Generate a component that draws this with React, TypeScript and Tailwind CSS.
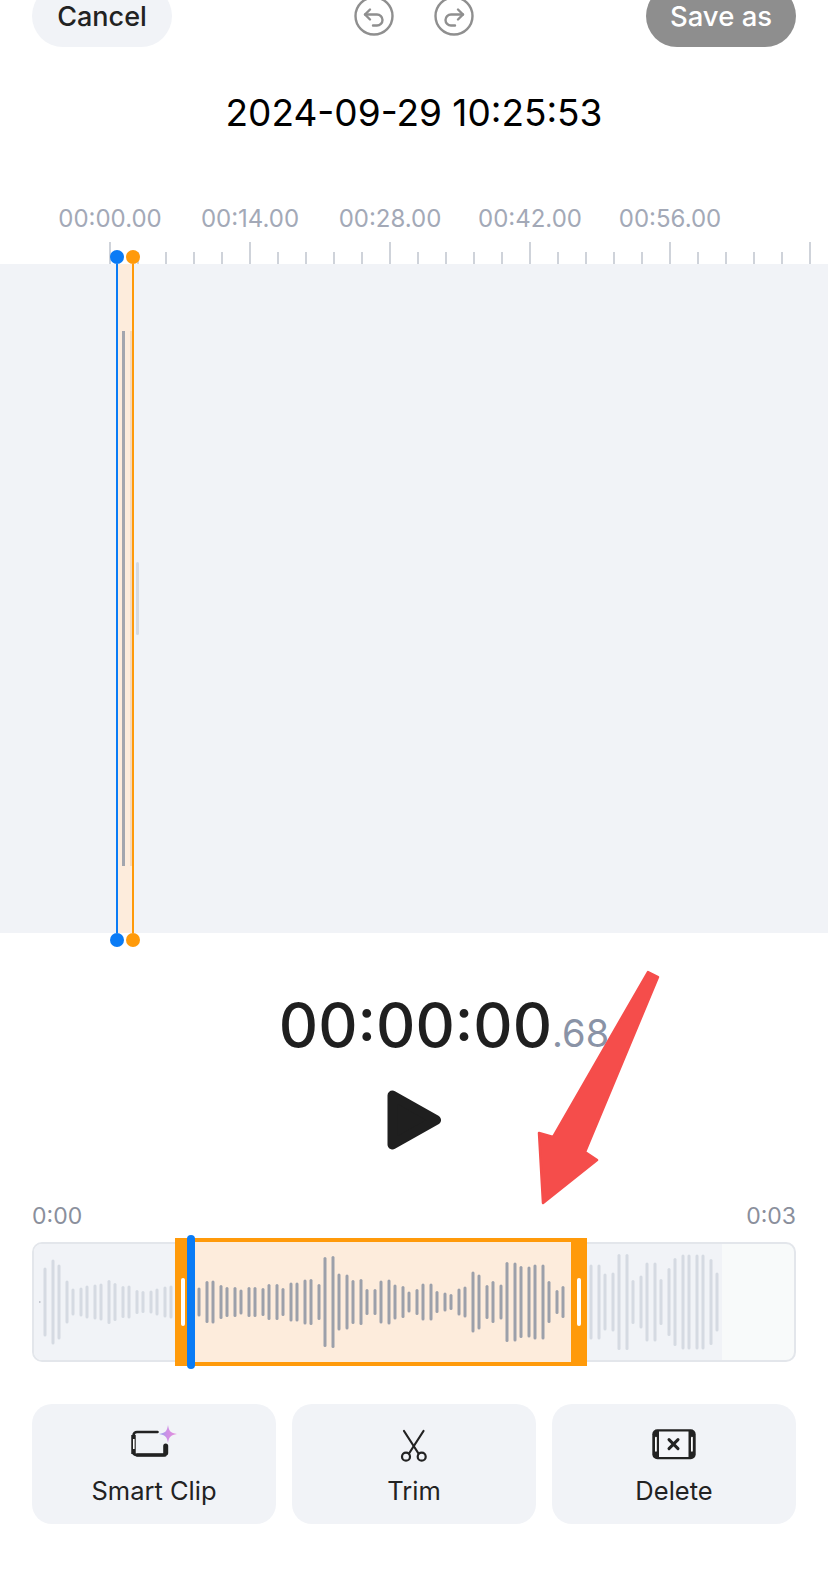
const FONT = "font-['Inter','Noto_Sans',sans-serif]";

const rulerLabels = ['00:00.00', '00:14.00', '00:28.00', '00:42.00', '00:56.00'];

// [x, height] in strip coordinates, read off the reference
const leftBars = [[45, 69], [53, 85], [59, 75], [67, 43], [73, 27], [81, 29], [87, 33], [95, 35], [101, 37], [109, 44], [115, 38], [123, 32], [129, 33], [137, 24], [143, 22], [151, 23], [157, 27], [165, 31], [171, 33]];
const midBars = [[199, 29], [207, 42], [213, 43], [221, 34], [227, 30], [235, 30], [241, 25], [249, 30], [255, 30], [263, 28], [269, 36], [277, 36], [283, 28], [291, 39], [297, 39], [305, 45], [311, 46], [319, 36], [325, 90], [333, 92], [339, 57], [347, 55], [353, 44], [361, 46], [367, 26], [375, 26], [381, 43], [389, 45], [395, 35], [403, 32], [409, 21], [417, 26], [423, 37], [431, 37], [437, 22], [445, 19], [451, 16], [459, 27], [465, 31], [473, 61], [479, 55], [487, 34], [493, 42], [501, 35], [507, 80], [515, 79], [521, 72], [529, 71], [535, 75], [543, 75], [549, 42], [557, 24], [563, 32]];
const rightBars = [[591, 75], [599, 75], [605, 57], [613, 59], [619, 96], [627, 96], [633, 44], [641, 53], [647, 79], [655, 79], [661, 46], [669, 68], [675, 88], [683, 95], [689, 95], [697, 95], [703, 95], [711, 86], [717, 59]];

function Ticks() {
  const ticks = [];
  for (let i = 0; i < 26; i++) {
    const major = i % 5 === 0;
    ticks.push(<rect key={i} x={109 + i * 28} y={major ? 0 : 10} width="2" height={major ? 22 : 12} fill="#cfd3da" />);
  }
  return (
    <svg width="828" height="22" className="block mt-[8px]">
      {ticks}
    </svg>
  );
}

function Bars({ bars, color, offset }: { bars: number[][]; color: string; offset: number }) {
  return (
    <>
      {bars.map(([x, h]) => (
        <rect key={x} x={x - offset - 1.5} y={60 - h / 2} width="3" height={h} rx="1.5" fill={color} />
      ))}
    </>
  );
}

function CircleArrow({ flip }: { flip?: boolean }) {
  return (
    <svg width="40" height="40" viewBox="0 0 40 40" fill="none" stroke="#8f8f8f" strokeWidth="2.4" strokeLinecap="round" strokeLinejoin="round">
      <circle cx="20" cy="20" r="18.5" />
      <g transform={flip ? 'translate(40 0) scale(-1 1)' : undefined}>
        <path d="M16 13.500l-5 5 5 5" />
        <path d="M11 18.500h12a5.500 5.500 0 0 1 0 11h-4" />
      </g>
    </svg>
  );
}

function SmartClipIcon() {
  return (
    <svg width="48" height="40" viewBox="0 0 48 40" fill="none">
      <defs>
        <linearGradient id="spark" x1="29" y1="10" x2="47" y2="10" gradientUnits="userSpaceOnUse">
          <stop offset="0" stopColor="#8fa4ec" />
          <stop offset="0.45" stopColor="#cf8fe6" />
          <stop offset="1" stopColor="#e58fd8" />
        </linearGradient>
      </defs>
      <path d="M27.5 8H7a3.5 3.5 0 0 0-3.5 3.5v18A3.5 3.5 0 0 0 7 31h26a3 3 0 0 0 3-3v-5" stroke="#222" strokeWidth="2.6" strokeLinecap="round" />
      <path d="M3.5 11v19" stroke="#222" strokeWidth="4.5" />
      <path d="M7 31h28" stroke="#222" strokeWidth="3.4" strokeLinecap="round" />
      <path d="M35.7 22v7" stroke="#222" strokeWidth="5" strokeLinecap="round" />
      <rect x="3" y="15" width="1.6" height="10" fill="#fff" />
      <path d="M38 1c.9 6 2.5 8 9 9-6.5 1-8.100 3-9 9-.9-6-2.500-8-9-9 6.500-1 8.100-3 9-9z" fill="url(#spark)" />
    </svg>
  );
}

function TrimIcon() {
  return (
    <svg width="48" height="40" viewBox="0 0 48 40" fill="none" stroke="#222" strokeWidth="2.2" strokeLinecap="round">
      <path d="M14 7l14.500 22.500" />
      <path d="M33.500 7L19 29.500" />
      <circle cx="16" cy="32.700" r="4" />
      <circle cx="31.700" cy="32.700" r="4" />
    </svg>
  );
}

function DeleteIcon() {
  return (
    <svg width="48" height="40" viewBox="0 0 48 40" fill="none">
      <rect x="2.300" y="5.300" width="43.400" height="30" rx="5" fill="#222" />
      <rect x="9" y="7.500" width="29.500" height="25.500" fill="#f4f5f9" />
      <rect x="5" y="12.700" width="1.800" height="15" rx="0.900" fill="#fff" />
      <rect x="41" y="12.700" width="1.800" height="15" rx="0.900" fill="#fff" />
      <path d="M19 15.600l9 9M28 15.600l-9 9" stroke="#222" strokeWidth="3" strokeLinecap="round" />
    </svg>
  );
}

function ToolButton({ icon, label }: { icon: React.ReactNode; label: string }) {
  return (
    <button className="h-[120px] rounded-[20px] bg-[#f1f3f7] flex flex-col items-center pt-[20px]">
      {icon}
      <span className="mt-[11px] text-[25.5px] leading-[32px] text-[#222222]">{label}</span>
    </button>
  );
}

function Marker({ color, className }: { color: string; className: string }) {
  return (
    <div className={`absolute top-[46px] w-[14px] h-[697px] flex flex-col items-center ${className}`}>
      <div className={`w-[14px] h-[14px] rounded-full shrink-0 ${color}`} />
      <div className={`w-[2.500px] flex-1 ${color}`} />
      <div className={`w-[14px] h-[14px] rounded-full shrink-0 ${color}`} />
    </div>
  );
}

function Grip() {
  return <div className="w-[4px] h-[48px] rounded-full bg-white" />;
}

export default function App() {
  return (
    <div className={`${FONT} relative w-[828px] h-[1574px] overflow-hidden bg-white`}>
      {/* top bar, cut off by the screen edge */}
      <div className="-mt-[15px] h-[62px] px-8 flex items-center justify-between">
        <button className="w-[140px] h-[62px] pt-[2px] rounded-full bg-[#f1f3f7] text-[27px] font-medium text-[#222222]">Cancel</button>
        <div className="ml-[10px] flex gap-[40px]">
          <CircleArrow />
          <CircleArrow flip />
        </div>
        <button className="w-[150px] h-[62px] pt-[2px] rounded-full bg-[#8e8e8e] text-[27.500px] font-medium text-white">Save as</button>
      </div>

      <h1 className="mt-[44px] h-[44px] text-center text-[37px] leading-[44px] font-normal text-black">2024-09-29 10:25:53</h1>

      {/* timeline */}
      <div className="relative">
        <div className="mt-[69px] h-[30px] pl-[40px] flex">
          {rulerLabels.map((t) => (
            <div key={t} className="w-[140px] text-center text-[24px] leading-[30px] text-[#a3a9b7]">{t}</div>
          ))}
        </div>
        <Ticks />
        <div className="h-[669px] bg-[#f1f3f7]">
          <svg width="828" height="669" className="block">
            <rect x="117" y="0" width="16" height="669" fill="#fdecdc" />
            <rect x="122" y="67" width="3" height="535" fill="#a3a6ae" />
            <rect x="130" y="67" width="2" height="535" fill="#f3d9bd" />
            <rect x="136" y="298" width="3" height="73" rx="1.500" fill="#d5dae3" />
          </svg>
        </div>
        {/* playhead and selection edge */}
        <Marker color="bg-[#0a7bf5]" className="left-[110px]" />
        <Marker color="bg-[#ff9a0a]" className="left-[126px]" />
      </div>

      {/* time readout */}
      <div className="mt-[56px] h-[72px] pl-[60px] flex items-baseline justify-center leading-[72px]">
        <span className="text-[61px] font-medium text-[#1f1f1f]">00:00:00</span>
        <span className="text-[38px] font-normal text-[#8a93a6]">.68</span>
      </div>

      <div className="mt-[29px] flex justify-center">
        <svg width="54" height="60" viewBox="0 0 54 60">
          <path d="M5.500 5.500L49 30 5.500 54.500z" fill="#1f1f1f" stroke="#1f1f1f" strokeWidth="10" strokeLinejoin="round" />
        </svg>
      </div>

      <div className="mt-[50px] px-8 h-[30px] flex justify-between text-[23px] leading-[32px] text-[#8a8f9c]">
        <span>0:00</span>
        <span>0:03</span>
      </div>

      {/* clip strip */}
      <div className="mx-8 mt-[12px] relative h-[120px]">
        <div className="h-full rounded-[10px] border-2 border-[#e3e6eb] bg-[#f8fafa] overflow-hidden">
          <div className="w-[688px] h-full bg-[#f1f3f7]" />
        </div>
        <svg width="764" height="120" className="absolute left-0 top-0">
          <Bars bars={leftBars} color="#d5dae2" offset={32} />
          <Bars bars={rightBars} color="#d5dae2" offset={32} />
          <rect x="7" y="59" width="1.500" height="2" fill="#c4c8d0" />
        </svg>
        {/* selected range with its two handles */}
        <div className="absolute left-[143px] -top-[4px] w-[412px] h-[128px] flex bg-[#fdecdc] border-y-4 border-[#ff9a0a]">
          <div className="w-[16px] -my-[4px] flex items-center justify-center bg-[#ff9a0a]"><Grip /></div>
          <svg width="380" height="120" className="flex-1">
            <Bars bars={midBars} color="#9ca0aa" offset={191} />
          </svg>
          <div className="w-[16px] -my-[4px] flex items-center justify-center bg-[#ff9a0a]"><Grip /></div>
        </div>
        <div className="absolute left-[155px] -top-[7px] w-[7.500px] h-[134px] rounded-full bg-[#0a7bf5]" />
      </div>

      <div className="mx-8 mt-[42px] grid grid-cols-3 gap-4">
        <ToolButton icon={<SmartClipIcon />} label="Smart Clip" />
        <ToolButton icon={<TrimIcon />} label="Trim" />
        <ToolButton icon={<DeleteIcon />} label="Delete" />
      </div>

      {/* red annotation arrow drawn over the screenshot */}
      <svg width="140" height="245" className="absolute left-[530px] top-[965px]">
        <path d="M118 7L128 12 55 187 67 195 13 238 9 168 23 172z" fill="#f54d4b" stroke="#f54d4b" strokeWidth="2.500" strokeLinejoin="round" />
      </svg>
    </div>
  );
}
